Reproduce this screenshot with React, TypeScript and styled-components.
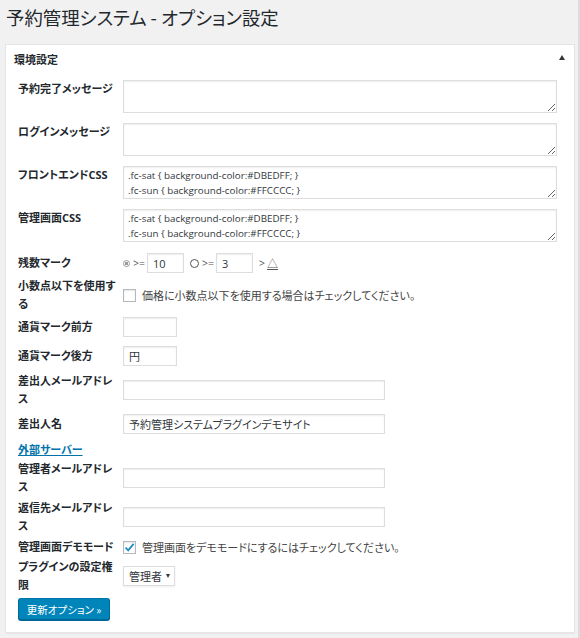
import React from "react";
import styled, {createGlobalStyle} from "styled-components";

const GlobalStyle = createGlobalStyle`
  html, body {
    margin: 0;
    padding: 0;
    background: #f1f1f1;
  }
  body {
    font-family: "Open Sans", "Noto Sans CJK JP", sans-serif;
    font-feature-settings: "palt";
    color: #444;
    border-right: 2px solid #dcdcdc;
    min-height: 638px;
    box-sizing: border-box;
  }
`

const Page = styled.div`
  padding: 4px 5px 0 5px;
`

const Title = styled.h1`
  margin: 0 0 0 1px;
  font-size: 18.4px;
  line-height: 26px;
  font-weight: 400;
  color: #23282d;
  font-family: "Noto Sans CJK JP", sans-serif;
`

const Panel = styled.div`
  margin-top: 14px;
  background: #fff;
  border: 1px solid #e5e5e5;
  box-shadow: 0 1px 1px rgba(0, 0, 0, .04);
  width: 570px;
  box-sizing: border-box;
`

const PanelHead = styled.div`
  display: flex;
  align-items: center;
  justify-content: space-between;
  height: 27px;
  padding: 0 8px 0 8px;
  font-size: 11px;
  font-weight: 700;
  color: #23282d;
  font-family: "Noto Sans CJK JP", sans-serif;
`

const Toggle = styled.span`
  width: 0;
  height: 0;
  border-left: 3px solid transparent;
  border-right: 3px solid transparent;
  border-bottom: 5px solid #32373c;
  margin-right: 1px;
  margin-top: -2px;
`

const PanelBody = styled.div`
  padding: 8px 17px 12px 12px;
`

const Row = styled.div<{ $gap?: number; $top?: boolean }>`
  display: flex;
  align-items: ${p => (p.$top ? "flex-start" : "center")};
  margin-top: ${p => p.$gap ?? 0}px;
`

const Label = styled.div`
  width: 105px;
  flex: none;
  font-size: 11px;
  line-height: 18px;
  font-weight: 700;
  color: #23282d;
  font-family: "Open Sans", "Noto Sans CJK JP", sans-serif;
  padding-right: 4px;
  box-sizing: border-box;
`

const TextArea = styled.textarea`
  display: block;
  width: 434px;
  height: 33px;
  margin: 0;
  padding: 1px 4px;
  box-sizing: border-box;
  border: 1px solid #ddd;
  box-shadow: inset 0 1px 2px rgba(0, 0, 0, .07);
  font-family: "Open Sans", sans-serif;
  font-size: 9.8px;
  line-height: 15px;
  color: #32373c;
  overflow: hidden;
  outline: none;
`

const TextInput = styled.input<{ $w: number }>`
  width: ${p => p.$w}px;
  height: 20px;
  margin: 0;
  padding: 0 5px;
  box-sizing: border-box;
  border: 1px solid #ddd;
  box-shadow: inset 0 1px 2px rgba(0, 0, 0, .07);
  font-family: "Open Sans", "Noto Sans CJK JP", sans-serif;
  font-feature-settings: "palt";
  font-size: 11px;
  color: #32373c;
  outline: none;
`

const Marks = styled.div`
  display: flex;
  align-items: center;
  font-size: 10.5px;
  color: #555;
`

const Sym = styled.span<{ $ml?: number }>`
  margin-left: ${p => p.$ml ?? 0}px;
  margin-right: 2px;
  display: inline-flex;
  align-items: center;
`

const Dot = styled.span<{ $double?: boolean; $size: number }>`
  display: inline-block;
  width: ${p => p.$size}px;
  height: ${p => p.$size}px;
  border-radius: 50%;
  border: 1px solid ${p => (p.$double ? "#999" : "#555")};
  box-sizing: border-box;
  margin-right: 3px;
  background: ${p => (p.$double ? "radial-gradient(circle, #999 45%, #fff 50%)" : "transparent")};
`

const Tri = styled.span`
  font-size: 11px;
  margin-left: 2px;
  font-family: "Noto Sans CJK JP", sans-serif;
  text-decoration: underline;
  text-underline-offset: 1px;
`

const CheckLine = styled.label`
  display: flex;
  align-items: center;
  font-size: 11px;
  line-height: 18px;
  color: #444;
  font-family: "Noto Sans CJK JP", sans-serif;
`

const Box = styled.span`
  width: 13px;
  height: 13px;
  border: 1px solid #b4b9be;
  box-shadow: inset 0 1px 2px rgba(0, 0, 0, .1);
  box-sizing: border-box;
  background: #fff;
  margin-right: 6px;
  display: inline-flex;
  align-items: center;
  justify-content: center;
  flex: none;
`

const Link = styled.a`
  font-size: 11px;
  line-height: 18px;
  font-weight: 700;
  color: #0073aa;
  text-decoration: underline;
  font-family: "Noto Sans CJK JP", sans-serif;
`

const SelectWrap = styled.div`
  position: relative;
  display: inline-block;
`

const Select = styled.select`
  display: block;
  appearance: none;
  width: 52px;
  height: 20px;
  padding: 0 0 0 5px;
  border: 1px solid #ddd;
  box-shadow: 0 1px 2px rgba(0, 0, 0, .07);
  background: #fff;
  font-family: "Noto Sans CJK JP", sans-serif;
  font-size: 11px;
  color: #32373c;
  outline: none;
`

const Caret = styled.span`
  position: absolute;
  right: 5px;
  top: 8px;
  width: 0;
  height: 0;
  border-left: 2.5px solid transparent;
  border-right: 2.5px solid transparent;
  border-top: 4px solid #32373c;
  pointer-events: none;
`

const Button = styled.button`
  display: block;
  margin-top: 4px;
  height: 22px;
  width: 92px;
  padding: 0;
  border: 1px solid #0073aa;
  border-color: #0073aa #006799 #006799;
  border-radius: 3px;
  background: #0085ba;
  box-shadow: 0 1px 0 #006799;
  color: #fff;
  font-size: 10.5px;
  font-family: "Noto Sans CJK JP", sans-serif;
  font-feature-settings: "palt";
  cursor: pointer;
`

const cssText = ".fc-sat { background-color:#DBEDFF; }\n.fc-sun { background-color:#FFCCCC; }";

const Check = () => (
    <svg width="11" height="11" viewBox="0 0 11 11">
        <path d="M1.5 5.5 L4.2 8.3 L9.6 1.8" fill="none" stroke="#1e8cbe" strokeWidth="1.8"/>
    </svg>
)

export default function App() {
    return (
        <Page>
            <GlobalStyle/>
            <Title>予約管理システム - オプション設定</Title>
            <Panel>
                <PanelHead>
                    <span>環境設定</span>
                    <Toggle/>
                </PanelHead>
                <PanelBody>
                    <Row $top>
                        <Label>予約完了メッセージ</Label>
                        <TextArea defaultValue=""/>
                    </Row>
                    <Row $top $gap={10}>
                        <Label>ログインメッセージ</Label>
                        <TextArea defaultValue=""/>
                    </Row>
                    <Row $top $gap={10}>
                        <Label>フロントエンドCSS</Label>
                        <TextArea defaultValue={cssText}/>
                    </Row>
                    <Row $top $gap={10}>
                        <Label>管理画面CSS</Label>
                        <TextArea defaultValue={cssText}/>
                    </Row>
                    <Row $gap={11}>
                        <Label>残数マーク</Label>
                        <Marks>
                            <Sym><Dot $double $size={7}/>&gt;=</Sym>
                            <TextInput $w={37} defaultValue="10"/>
                            <Sym $ml={6}><Dot $size={9}/>&gt;=</Sym>
                            <TextInput $w={37} defaultValue="3"/>
                            <Sym $ml={6}>&gt;<Tri>△</Tri></Sym>
                        </Marks>
                    </Row>
                    <Row $gap={4}>
                        <Label>小数点以下を使用する</Label>
                        <CheckLine>
                            <Box/>
                            価格に小数点以下を使用する場合はチェックしてください。
                        </CheckLine>
                    </Row>
                    <Row $gap={4}>
                        <Label>通貨マーク前方</Label>
                        <TextInput $w={54} defaultValue=""/>
                    </Row>
                    <Row $gap={9}>
                        <Label>通貨マーク後方</Label>
                        <TextInput $w={54} defaultValue="円"/>
                    </Row>
                    <Row $gap={6}>
                        <Label>差出人メールアドレス</Label>
                        <TextInput $w={262} defaultValue=""/>
                    </Row>
                    <Row $gap={6}>
                        <Label>差出人名</Label>
                        <TextInput $w={262} defaultValue="予約管理システムプラグインデモサイト"/>
                    </Row>
                    <Row $gap={6}>
                        <Link href="#">外部サーバー</Link>
                    </Row>
                    <Row $gap={2}>
                        <Label>管理者メールアドレス</Label>
                        <TextInput $w={262} defaultValue=""/>
                    </Row>
                    <Row $gap={3}>
                        <Label>返信先メールアドレス</Label>
                        <TextInput $w={262} defaultValue=""/>
                    </Row>
                    <Row $gap={3}>
                        <Label>管理画面デモモード</Label>
                        <CheckLine>
                            <Box><Check/></Box>
                            管理画面をデモモードにするにはチェックしてください。
                        </CheckLine>
                    </Row>
                    <Row $gap={2}>
                        <Label>プラグインの設定権限</Label>
                        <SelectWrap>
                            <Select defaultValue="admin">
                                <option value="admin">管理者</option>
                            </Select>
                            <Caret/>
                        </SelectWrap>
                    </Row>
                    <Button>更新オプション »</Button>
                </PanelBody>
            </Panel>
        </Page>
    );
}
